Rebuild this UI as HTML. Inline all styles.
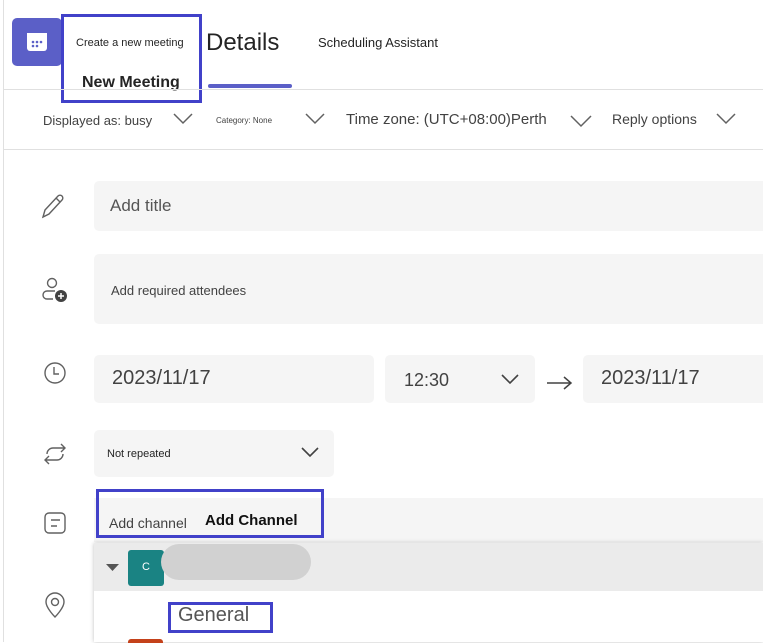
<!DOCTYPE html>
<html><head><meta charset="utf-8"><style>
*{margin:0;padding:0;box-sizing:border-box}
body{width:763px;height:642px;overflow:hidden;background:#fff;font-family:"Liberation Sans",sans-serif;color:#424242;position:relative}
.a{position:absolute}
.f{position:absolute;background:#f5f5f5;border-radius:5px}
.t{position:absolute;white-space:nowrap}
.bx{position:absolute;border:3px solid #4141c9}
svg{position:absolute}
</style></head><body>
<div class="a" style="left:3px;top:0;width:1px;height:642px;background:#e0e0e0"></div>
<div class="a" style="left:12px;top:18px;width:50px;height:48px;background:#5b5fc7;border-radius:5px"></div>
<svg style="left:25px;top:30px" width="24" height="24" viewBox="0 0 24 24"><rect x="2" y="3" width="20" height="18" rx="3" fill="#fff"/><rect x="2" y="3" width="20" height="4" fill="#fff"/><g fill="#5b5fc7"><circle cx="8" cy="12" r="1.3"/><circle cx="12" cy="12" r="1.3"/><circle cx="16" cy="12" r="1.3"/><circle cx="8" cy="16" r="1.3"/><circle cx="12" cy="16" r="1.3"/></g></svg>
<div class="bx" style="left:61px;top:14px;width:141px;height:89px"></div>
<div class="t" style="left:76px;top:37px;font-size:11px;color:#242424">Create a new meeting</div>
<div class="t" style="left:82px;top:74px;font-size:16px;font-weight:bold;color:#242424">New Meeting</div>
<div class="t" style="left:206px;top:29px;font-size:24px;color:#242424">Details</div>
<div class="a" style="left:208px;top:84px;width:84px;height:4px;background:#5b5fc7;border-radius:2px"></div>
<div class="t" style="left:318px;top:35px;font-size:13px;color:#242424">Scheduling Assistant</div>
<div class="a" style="left:4px;top:89px;width:759px;height:1px;background:#e0e0e0"></div>
<div class="t" style="left:43px;top:113px;font-size:13px">Displayed as: busy</div>
<svg style="left:173px;top:112px" width="20" height="14"><path d="M1 2l9 9 9-9" fill="none" stroke="#616161" stroke-width="1.5"/></svg>
<div class="t" style="left:216px;top:116px;font-size:8px">Category: None</div>
<svg style="left:305px;top:112px" width="20" height="14"><path d="M1 2l9 9 9-9" fill="none" stroke="#616161" stroke-width="1.5"/></svg>
<div class="t" style="left:346px;top:111px;font-size:15px">Time zone: (UTC+08:00)Perth</div>
<svg style="left:570px;top:114px" width="22" height="14"><path d="M1 2l10 10 10-10" fill="none" stroke="#616161" stroke-width="1.5"/></svg>
<div class="t" style="left:612px;top:111px;font-size:14px">Reply options</div>
<svg style="left:716px;top:112px" width="20" height="14"><path d="M1 2l9 9 9-9" fill="none" stroke="#616161" stroke-width="1.5"/></svg>
<div class="a" style="left:4px;top:149px;width:759px;height:1px;background:#e0e0e0"></div>

<svg style="left:40px;top:193px" width="30" height="28" viewBox="0 0 30 28"><path d="M3 24l2-7 13-14a2.5 2.5 0 0 1 4 4L9 21l-6 3zM16 5l4 4" fill="none" stroke="#616161" stroke-width="1.4"/></svg>
<div class="f" style="left:94px;top:181px;width:680px;height:50px"></div>
<div class="t" style="left:110px;top:196px;font-size:17px;color:#555">Add title</div>

<svg style="left:40px;top:275px" width="30" height="30" viewBox="0 0 30 30"><circle cx="12" cy="8" r="4.5" fill="none" stroke="#616161" stroke-width="1.4"/><path d="M15 16H7a4 4 0 0 0 0 8h6" fill="none" stroke="#616161" stroke-width="1.4"/><circle cx="21" cy="21" r="6" fill="#424242"/><path d="M21 18v6M18 21h6" stroke="#fff" stroke-width="1.5"/></svg>
<div class="f" style="left:94px;top:254px;width:680px;height:70px"></div>
<div class="t" style="left:111px;top:283px;font-size:13px">Add required attendees</div>

<svg style="left:41px;top:361px" width="28" height="28" viewBox="0 0 28 28"><circle cx="14" cy="12" r="10" fill="none" stroke="#616161" stroke-width="1.4"/><path d="M13 6v7h5" fill="none" stroke="#616161" stroke-width="1.4"/></svg>
<div class="f" style="left:94px;top:355px;width:280px;height:48px"></div>
<div class="t" style="left:112px;top:367px;font-size:20px">2023/11/17</div>
<div class="f" style="left:385px;top:355px;width:150px;height:48px"></div>
<div class="t" style="left:404px;top:370px;font-size:18px">12:30</div>
<svg style="left:500px;top:373px" width="20" height="14"><path d="M2 2l8 8 8-8" fill="none" stroke="#424242" stroke-width="1.6"/></svg>
<svg style="left:546px;top:374px" width="28" height="18"><path d="M1 9h24M18 3l7 6-7 6" fill="none" stroke="#424242" stroke-width="1.5"/></svg>
<div class="f" style="left:583px;top:355px;width:190px;height:48px"></div>
<div class="t" style="left:601px;top:367px;font-size:20px">2023/11/17</div>

<svg style="left:41px;top:442px" width="28" height="24" viewBox="0 0 28 24"><path d="M6 12a6 6 0 0 1 6-6h12M20 2l4 4-4 4M22 12a6 6 0 0 1-6 6H4M8 14l-4 4 4 4" fill="none" stroke="#616161" stroke-width="1.4"/></svg>
<div class="f" style="left:94px;top:430px;width:240px;height:47px"></div>
<div class="t" style="left:107px;top:448px;font-size:11px;color:#242424">Not repeated</div>
<svg style="left:300px;top:446px" width="20" height="14"><path d="M2 2l8 8 8-8" fill="none" stroke="#424242" stroke-width="1.6"/></svg>

<svg style="left:42px;top:510px" width="26" height="26" viewBox="0 0 26 26"><rect x="3" y="3" width="20" height="20" rx="4" fill="none" stroke="#616161" stroke-width="1.4"/><path d="M9 10h9M9 16h6" stroke="#616161" stroke-width="1.4"/></svg>
<div class="f" style="left:94px;top:498px;width:680px;height:44px;border-radius:0"></div>
<div class="t" style="left:109px;top:515px;font-size:14px">Add channel</div>
<div class="t" style="left:205px;top:512px;font-size:15px;font-weight:bold;color:#111">Add Channel</div>
<div class="bx" style="left:96px;top:489px;width:228px;height:49px"></div>

<svg style="left:42px;top:590px" width="26" height="30" viewBox="0 0 26 30"><path d="M13 27s-9-9-9-15a9 9 0 0 1 18 0c0 6-9 15-9 15z" fill="none" stroke="#616161" stroke-width="1.4"/><circle cx="13" cy="12" r="3.5" fill="none" stroke="#616161" stroke-width="1.4"/></svg>
<div class="a" style="left:94px;top:543px;width:669px;height:99px;background:#fff;box-shadow:0 0 4px rgba(0,0,0,.25)"></div>
<div class="a" style="left:94px;top:543px;width:669px;height:48px;background:#ebebeb"></div>
<svg style="left:106px;top:563px" width="14" height="10"><path d="M0 1h13l-6.5 7z" fill="#555"/></svg>
<div class="a" style="left:128px;top:550px;width:36px;height:36px;background:#1a8383;border-radius:3px"></div>
<div class="t" style="left:142px;top:561px;font-size:11px;color:#fff">C</div>
<div class="a" style="left:161px;top:544px;width:150px;height:36px;background:#d1d1d1;border-radius:18px"></div>
<div class="t" style="left:178px;top:604px;font-size:20px;color:#555">General</div>
<div class="bx" style="left:168px;top:602px;width:105px;height:31px"></div>
<div class="a" style="left:128px;top:639px;width:35px;height:4px;background:#c4411a;border-radius:3px 3px 0 0"></div>
</body></html>
